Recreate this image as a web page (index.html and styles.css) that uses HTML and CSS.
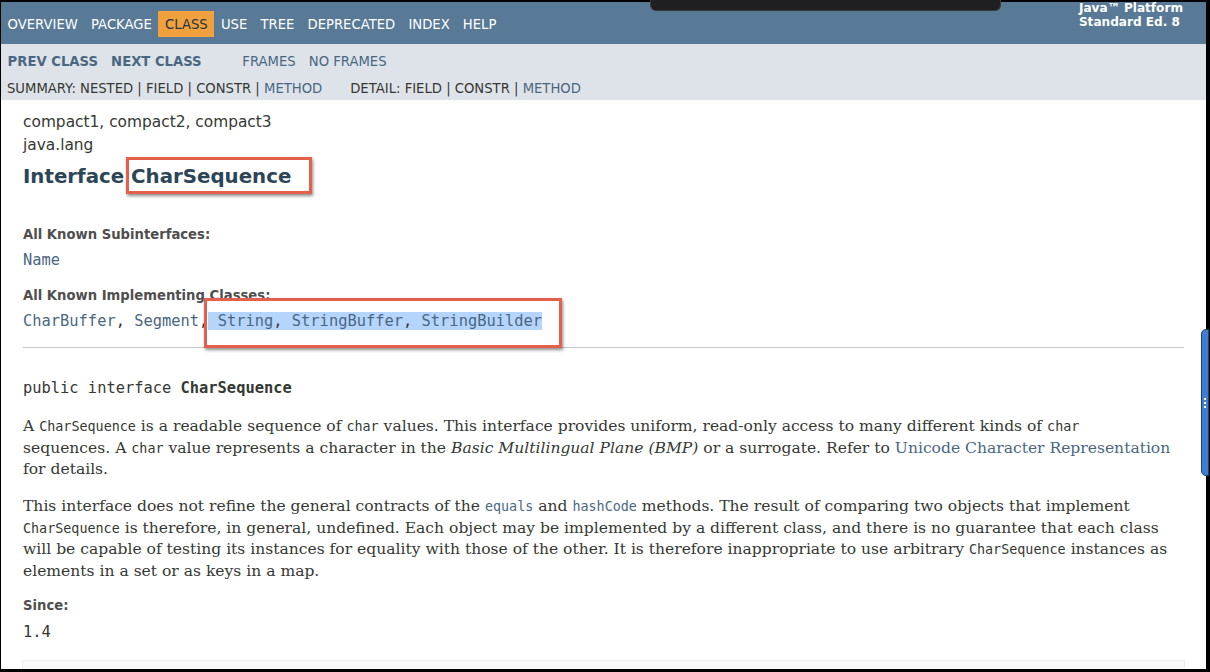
FILE: index.html
```html
<!DOCTYPE html>
<html>
<head>
<meta charset="utf-8">
<title>CharSequence</title>
<link rel="stylesheet" href="styles.css">
</head>
<body>
<div class="window">
  <header class="top-nav">
    <ul class="nav-list">
      <li>Overview</li><li>Package</li><li class="current">Class</li><li>Use</li><li>Tree</li><li>Deprecated</li><li>Index</li><li>Help</li>
    </ul>
    <div class="about">Java™ Platform<br>Standard Ed. 8</div>
  </header>
  <nav class="sub-nav">
    <div class="row1">
      <ul class="nav-list prevnext"><li><a>Prev Class</a></li><li><a>Next Class</a></li></ul>
      <ul class="nav-list"><li><a>Frames</a></li><li><a>No Frames</a></li></ul>
    </div>
    <div class="row2">
      <div>Summary:&nbsp;Nested&nbsp;|&nbsp;Field&nbsp;|&nbsp;Constr&nbsp;|&nbsp;<a>Method</a></div>
      <div>Detail:&nbsp;Field&nbsp;|&nbsp;Constr&nbsp;|&nbsp;<a>Method</a></div>
    </div>
  </nav>
  <main class="content">
    <div class="sub-title">compact1, compact2, compact3</div>
    <div class="sub-title">java.lang</div>
    <h2 class="title">Interface <span class="annot">CharSequence<span class="mark mark1"></span></span></h2>
    <dl class="info">
      <dt class="dt1">All Known Subinterfaces:</dt>
      <dd class="code"><a>Name</a></dd>
      <dt class="dt2">All Known Implementing Classes:</dt>
      <dd class="code"><a>CharBuffer</a>, <a>Segment</a>,<span class="annot sel"> <a>String</a>, <a>StringBuffer</a>, <a>StringBuilder</a><span class="mark mark2"></span></span></dd>
    </dl>
    <hr class="rule">
    <pre class="signature">public interface <b>CharSequence</b></pre>
    <p class="block p1">A <code>CharSequence</code> is a readable sequence of <code>char</code> values. This interface provides uniform, read-only access to many different kinds of <code>char</code><br>sequences. A <code>char</code> value represents a character in the <i>Basic Multilingual Plane (BMP)</i> or a surrogate. Refer to <a>Unicode Character Representation</a> for details.</p>
    <p class="block p2">This interface does not refine the general contracts of the <a><code>equals</code></a> and <a><code>hashCode</code></a> methods. The result of comparing two objects that implement <code>CharSequence</code> is therefore, in general, undefined. Each object may be implemented by a different class, and there is no guarantee that each class will be capable of testing its instances for equality with those of the other. It is therefore inappropriate to use arbitrary <code>CharSequence</code> instances as elements in a set or as keys in a map.</p>
    <dl class="since">
      <dt>Since:</dt>
      <dd class="code">1.4</dd>
    </dl>
    <div class="next-section"></div>
  </main>
</div>
<div class="tooltip"></div>
<div class="scroll-handle"><span class="grip"></span></div>
</body>
</html>
```

FILE: styles.css
```css
html, body {
  margin: 0;
  padding: 0;
}
body {
  background: #000;
  height: 672px;
  overflow: hidden;
  position: relative;
}
.window {
  margin: 2px 4px 0 1px;
  height: 667px;
  background: #fff;
  overflow: hidden;
  font-family: "DejaVu Sans", "Liberation Sans", sans-serif;
  font-size: 15.4px;
  color: #353833;
}
a {
  color: #4a6782;
  text-decoration: none;
}
.nav-list {
  list-style: none;
  margin: 0;
  padding: 0;
  display: flex;
}
.top-nav {
  display: flex;
  justify-content: space-between;
  align-items: flex-start;
  height: 42px;
  box-sizing: border-box;
  padding-top: 9px;
  background: #587a96;
  color: #fff;
}
.top-nav .nav-list li {
  padding: 5.5px 6.6px;
  font-size: 13.2px;
  line-height: 15px;
  text-transform: uppercase;
}
.top-nav .nav-list li.current {
  background: #f0a03c;
  color: #253441;
}
.about {
  margin-top: -10px;
  padding-right: 23px;
  font-size: 12.1px;
  line-height: 14px;
  font-weight: bold;
}
.sub-nav {
  height: 56px;
  background: #dee3e9;
  font-size: 13.2px;
  line-height: 15px;
  text-transform: uppercase;
}
.row1 {
  display: flex;
  height: 30px;
  box-sizing: border-box;
  padding-top: 4px;
}
.row1 li {
  padding: 5.5px 6.6px;
}
.row1 .prevnext {
  margin-right: 27.5px;
  font-weight: bold;
}
.row2 {
  display: flex;
  gap: 28px;
  padding: 6.5px 0 4.5px 6px;
}
.content {
  margin: 0 22px;
  padding-top: 11px;
}
.sub-title {
  line-height: 22.5px;
}
.title {
  margin: 10px 0 11px;
  font-size: 19.8px;
  line-height: 22px;
  font-weight: bold;
  color: #2c4557;
}
.annot {
  position: relative;
}
.mark {
  position: absolute;
  border: 3px solid #e5604a;
  box-shadow: 1px 2px 3px rgba(0, 0, 0, 0.45);
  pointer-events: none;
}
.mark1 {
  left: -5px;
  right: -21px;
  top: -8px;
  bottom: -6px;
}
.mark2 {
  left: -4px;
  right: -20px;
  top: -14px;
  bottom: -18px;
}
.sel {
  background: #b5d5fd;
}
dl, dd, p, pre {
  margin: 0;
}
dt {
  font-size: 13.2px;
  line-height: 20px;
  font-weight: bold;
  color: #4e4e4e;
}
dd {
  margin-top: 4px;
  line-height: 22px;
}
.code, .signature {
  font-family: "DejaVu Sans Mono", "Liberation Mono", monospace;
  font-size: 15.4px;
}
.dt1 {
  margin-top: 37px;
}
.dt2 {
  margin-top: 15px;
}
.rule {
  border: 0;
  border-top: 1px solid #c6c6c6;
  margin: 15px 0 0;
  height: 0;
}
.signature {
  margin-top: 29px;
  line-height: 22px;
}
.signature b {
  font-weight: bold;
}
.block {
  font-family: "DejaVu Serif", "Liberation Serif", serif;
  font-size: 15.55px;
  line-height: 21.56px;
  color: #353833;
}
.block code {
  font-family: "DejaVu Sans Mono", "Liberation Mono", monospace;
  font-size: 13.4px;
  line-height: 1;
}
.p1 {
  margin-top: 17px;
}
.p2 {
  margin-top: 15.3px;
}
.since {
  margin-top: 13.6px;
}
.since dd {
  margin-top: 5px;
}
.next-section {
  margin: 17px -1px 0 -1px;
  height: 40px;
  background: #f8f8f8;
  border: 1px solid #ededed;
}
.tooltip {
  position: absolute;
  left: 650px;
  top: 0;
  width: 351px;
  height: 11px;
  background: #1f1f21;
  border: 1px solid #3a3a3c;
  border-top: 0;
  border-radius: 0 0 6px 6px;
  box-sizing: border-box;
}
.scroll-handle {
  position: absolute;
  left: 1201px;
  top: 329px;
  width: 8px;
  height: 147px;
  background: #3d7fd6;
  border: 1px solid #1c3f6e;
  border-radius: 5px 0 0 5px;
  box-sizing: border-box;
}
.grip {
  position: absolute;
  left: 2px;
  top: 68px;
  width: 2px;
  height: 10px;
  background: repeating-linear-gradient(#fff 0 2px, transparent 2px 4px);
}
```
